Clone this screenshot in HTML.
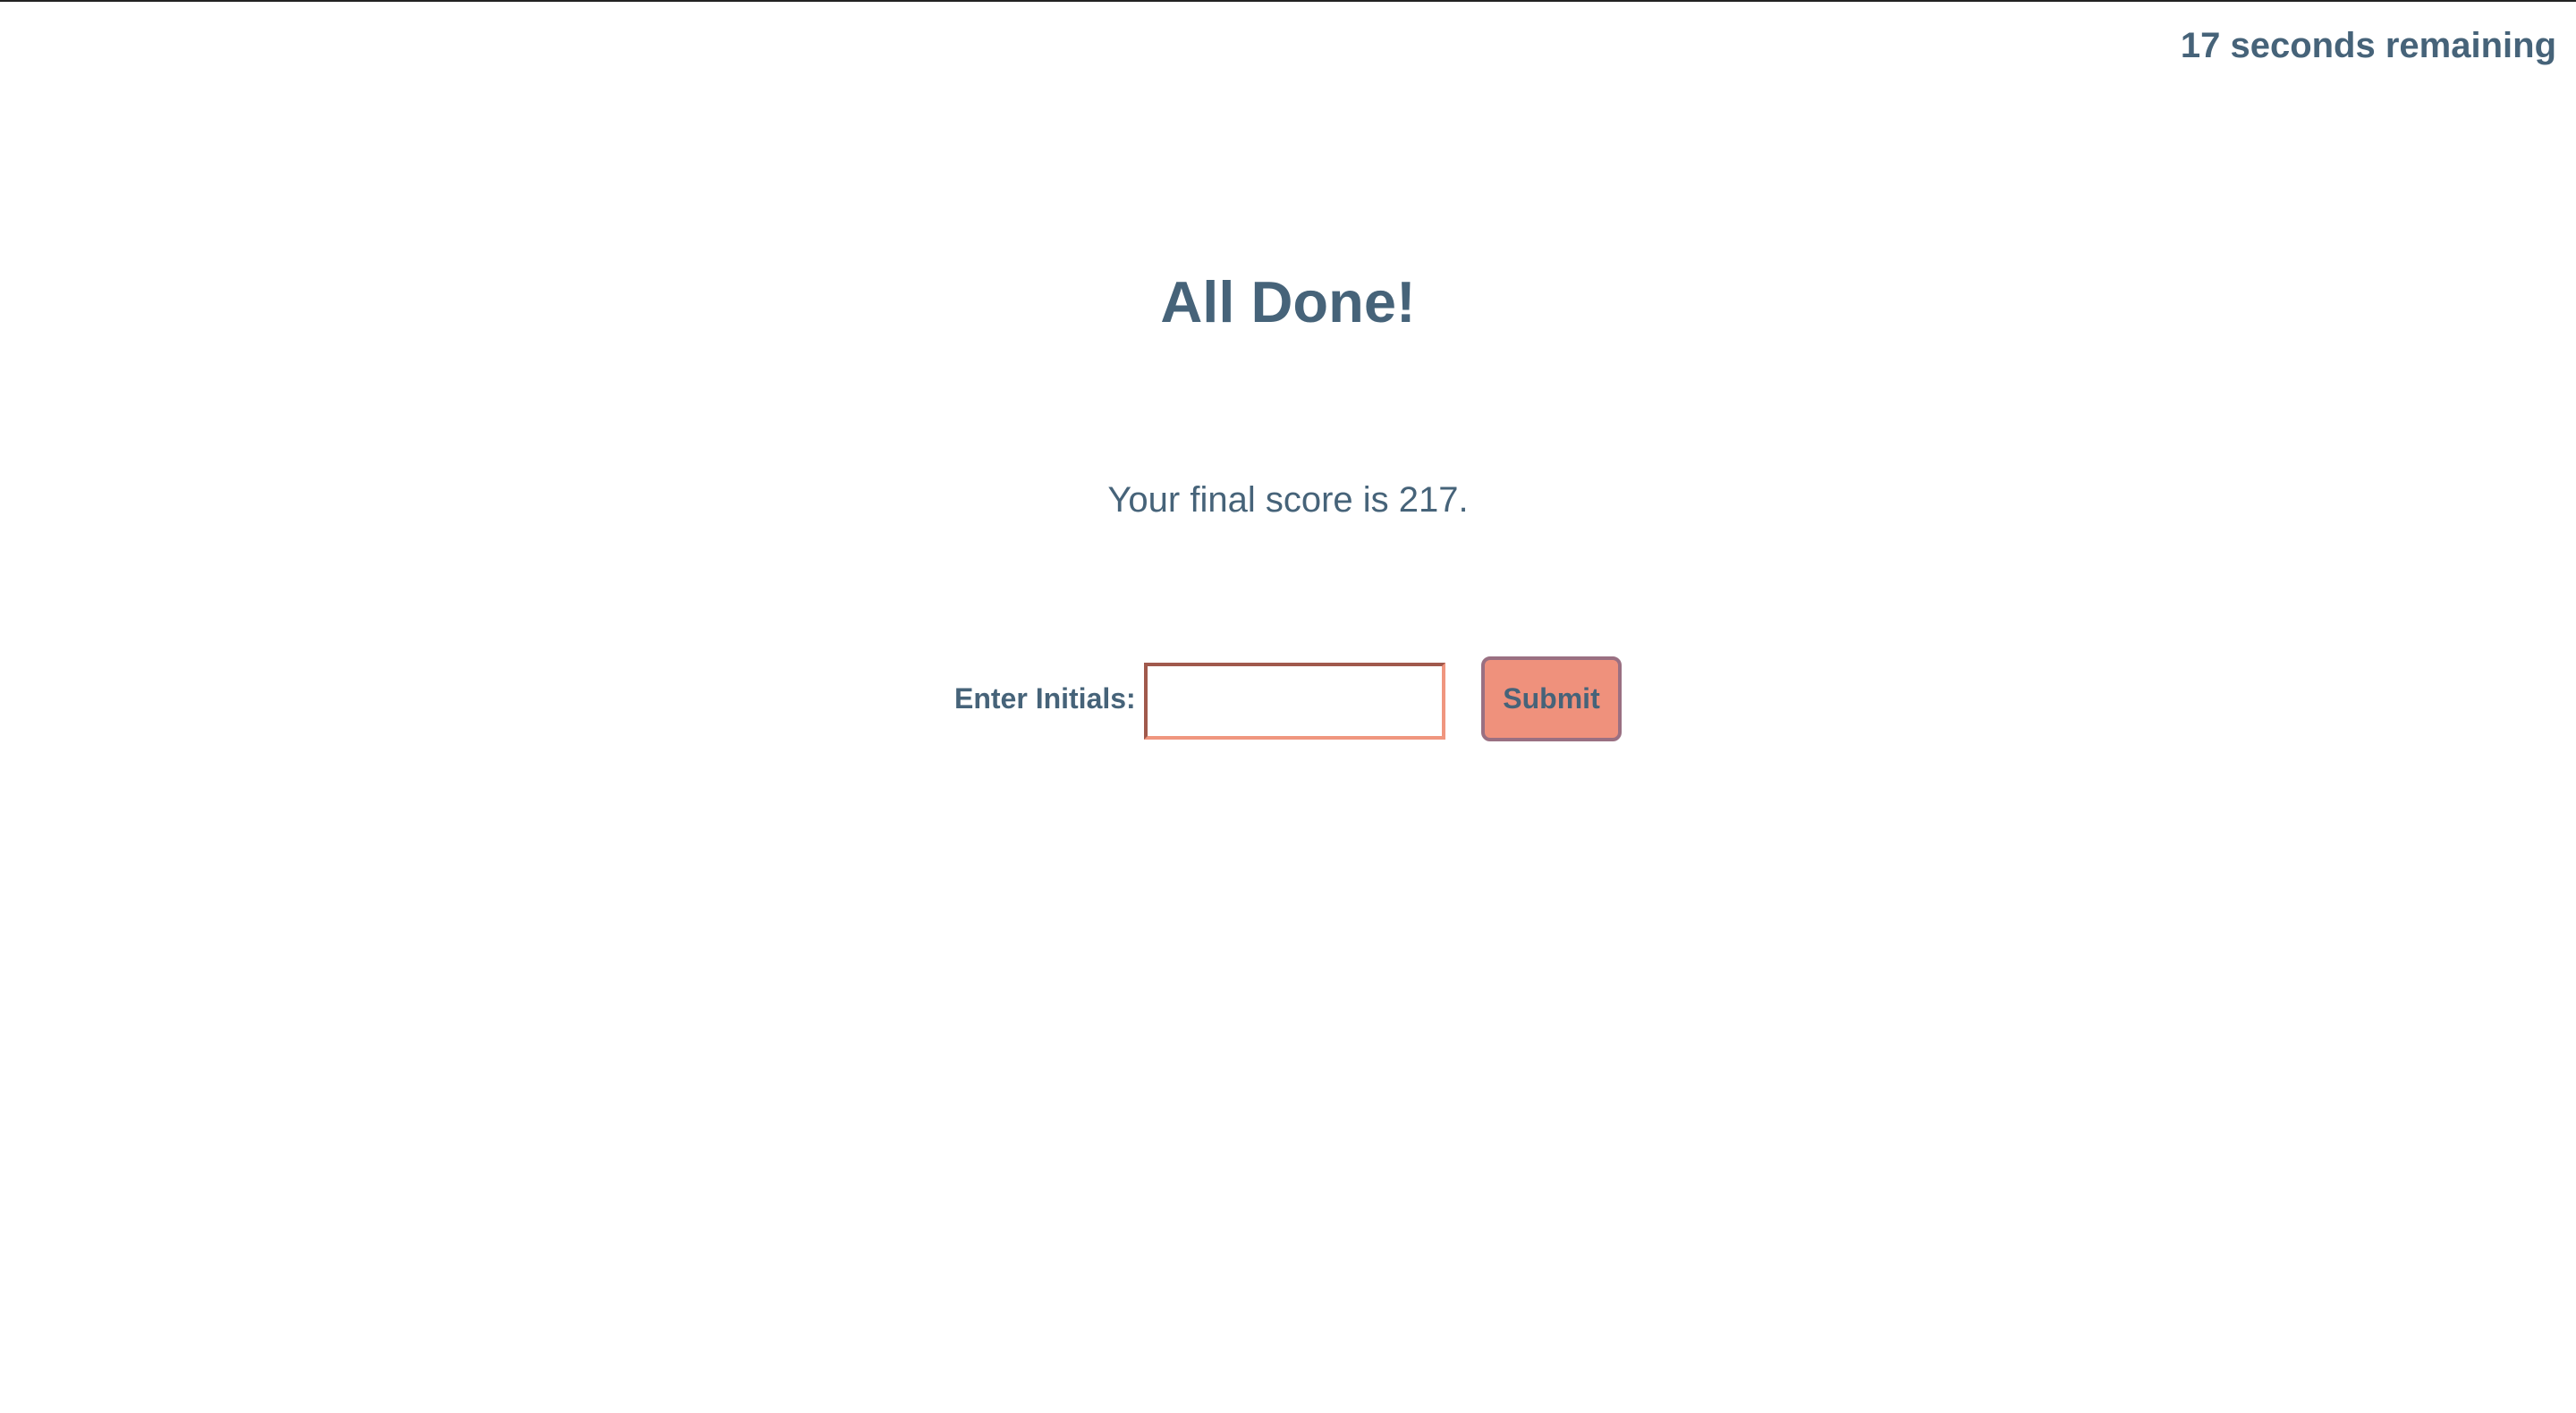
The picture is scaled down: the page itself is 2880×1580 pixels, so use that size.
<!DOCTYPE html>
<html><head><meta charset="utf-8"><style>
html,body{margin:0;padding:0;background:#fff;width:2880px;height:1580px;overflow:hidden;font-family:"Liberation Sans",Arial,sans-serif;color:#466379}
.top{position:absolute;left:0;top:0;width:2880px;height:2px;background:#222}
.timer{position:absolute;right:22px;top:23px;font-size:40px;font-weight:bold;line-height:56px}
.h{position:absolute;left:0;width:2880px;text-align:center;top:298px;font-size:65px;font-weight:bold;line-height:80px;margin:0}
.s{position:absolute;left:0;width:2880px;text-align:center;top:533px;font-size:40px;line-height:52px}
.lab{position:absolute;left:1067px;top:761px;font-size:32px;font-weight:bold;line-height:40px}
.inp{position:absolute;left:1279px;top:741px;width:329px;height:78px;border:4px solid;border-color:#a0594c #f0967f #f0967f #a0594c;background:#fff}
.btn{position:absolute;left:1656px;top:734px;width:149px;height:87px;border:4px solid #9a7082;border-radius:10px;background:#ef917c;font-size:32px;font-weight:bold;text-align:center;line-height:87px}
</style></head><body>
<div class="top"></div>
<div class="timer">17 seconds remaining</div>
<h1 class="h">All Done!</h1>
<div class="s">Your final score is 217.</div>
<div class="lab">Enter Initials:</div>
<div class="inp"></div>
<div class="btn">Submit</div>
</body></html>
